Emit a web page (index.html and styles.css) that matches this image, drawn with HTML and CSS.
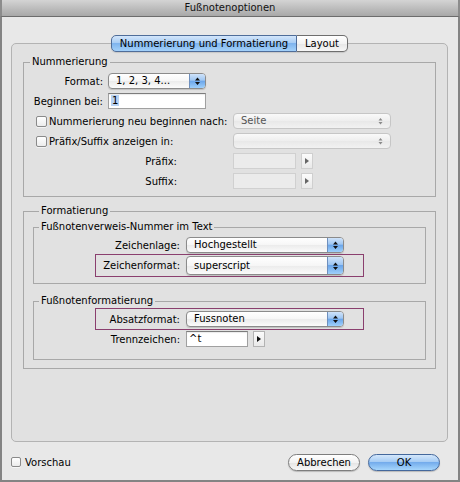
FILE: index.html
```html
<!DOCTYPE html>
<html lang="de">
<head>
<meta charset="utf-8">
<title>Fußnotenoptionen</title>
<link rel="stylesheet" href="styles.css">
</head>
<body>
<div class="window">
  <div class="titlebar">Fußnotenoptionen</div>
  <div class="body">
    <div class="panel">
      <div class="tabs">
        <span class="tab tab-sel">Nummerierung und Formatierung</span><span class="tab tab-layout">Layout</span>
      </div>

      <fieldset class="group group-num">
        <legend>Nummerierung</legend>
        <div class="rows">
          <div class="row">
            <span class="lbl lbl-num">Format:</span>
            <div class="popup popup-format">
              <span class="popup-text">1, 2, 3, 4...</span>
              <span class="popup-arrows"><svg width="7" height="10" viewBox="0 0 7 10"><path d="M3.5 1.5 L6 4.5 L1 4.5 Z M1 6 L6 6 L3.5 9 Z" fill="#111"/></svg></span>
            </div>
          </div>
          <div class="row">
            <span class="lbl lbl-num">Beginnen bei:</span>
            <div class="field field-start"><span class="sel-text">1</span></div>
          </div>
          <div class="row">
            <div class="check-label"><span class="checkbox"></span><span>Nummerierung neu beginnen nach:</span></div>
            <div class="popup popup-wide popup-disabled">
              <span class="popup-text">Seite</span>
              <span class="popup-arrows"><svg width="7" height="10" viewBox="0 0 7 10"><path d="M3.5 2 L5.5 4.5 L1.5 4.5 Z M1.5 6 L5.5 6 L3.5 8.5 Z" fill="#8a8a8a"/></svg></span>
            </div>
          </div>
          <div class="row">
            <div class="check-label"><span class="checkbox"></span><span>Präfix/Suffix anzeigen in:</span></div>
            <div class="popup popup-wide popup-disabled">
              <span class="popup-text"></span>
              <span class="popup-arrows"><svg width="7" height="10" viewBox="0 0 7 10"><path d="M3.5 2 L5.5 4.5 L1.5 4.5 Z M1.5 6 L5.5 6 L3.5 8.5 Z" fill="#8a8a8a"/></svg></span>
            </div>
          </div>
          <div class="row">
            <span class="lbl lbl-affix">Präfix:</span>
            <div class="field field-affix field-disabled"></div>
            <span class="arrow-btn arrow-disabled"><svg width="4" height="6" viewBox="0 0 4 6"><path d="M0 0 L4 3 L0 6 Z" fill="#666"/></svg></span>
          </div>
          <div class="row">
            <span class="lbl lbl-affix">Suffix:</span>
            <div class="field field-affix field-disabled"></div>
            <span class="arrow-btn arrow-disabled"><svg width="4" height="6" viewBox="0 0 4 6"><path d="M0 0 L4 3 L0 6 Z" fill="#666"/></svg></span>
          </div>
        </div>
      </fieldset>

      <fieldset class="group group-fmt">
        <legend>Formatierung</legend>

        <fieldset class="sub sub-ref">
          <legend>Fußnotenverweis-Nummer im Text</legend>
          <div class="frow">
            <span class="lbl lbl-fmt">Zeichenlage:</span>
            <div class="popup popup-fmt">
              <span class="popup-text">Hochgestellt</span>
              <span class="popup-arrows"><svg width="7" height="10" viewBox="0 0 7 10"><path d="M3.5 1.5 L6 4.5 L1 4.5 Z M1 6 L6 6 L3.5 9 Z" fill="#111"/></svg></span>
            </div>
          </div>
          <div class="frow frow-hl frow-tall">
            <span class="lbl lbl-fmt">Zeichenformat:</span>
            <div class="popup popup-fmt popup-tall">
              <span class="popup-text">superscript</span>
              <span class="popup-arrows"><svg width="7" height="10" viewBox="0 0 7 10"><path d="M3.5 1.5 L6 4.5 L1 4.5 Z M1 6 L6 6 L3.5 9 Z" fill="#111"/></svg></span>
            </div>
          </div>
        </fieldset>

        <fieldset class="sub sub-note">
          <legend>Fußnotenformatierung</legend>
          <div class="frow frow-hl">
            <span class="lbl lbl-fmt">Absatzformat:</span>
            <div class="popup popup-fmt">
              <span class="popup-text">Fussnoten</span>
              <span class="popup-arrows"><svg width="7" height="10" viewBox="0 0 7 10"><path d="M3.5 1.5 L6 4.5 L1 4.5 Z M1 6 L6 6 L3.5 9 Z" fill="#111"/></svg></span>
            </div>
          </div>
          <div class="frow frow-sep">
            <span class="lbl lbl-fmt">Trennzeichen:</span>
            <div class="field field-sep"><span>^t</span></div>
            <span class="arrow-btn"><svg width="4" height="6" viewBox="0 0 4 6"><path d="M0 0 L4 3 L0 6 Z" fill="#111"/></svg></span>
          </div>
        </fieldset>
      </fieldset>
    </div>

    <div class="footer">
      <span class="checkbox checkbox-small"></span>
      <span class="preview-label">Vorschau</span>
      <span class="btn btn-cancel">Abbrechen</span>
      <span class="btn btn-ok">OK</span>
    </div>
  </div>
</div>
</body>
</html>
```

FILE: styles.css
```css
* { box-sizing: border-box; }

html, body {
  margin: 0;
  padding: 0;
}

body {
  font-family: "DejaVu Sans", "Liberation Sans", sans-serif;
  font-size: 10px;
  color: #000;
  background: #808080;
}

.window {
  width: 460px;
  height: 482px;
  display: flex;
  flex-direction: column;
}

.titlebar {
  height: 17px;
  line-height: 16px;
  text-align: center;
  color: #111;
  background: linear-gradient(#d4d4d4, #b9b9b9 60%, #a8a8a8);
  border-bottom: 1px solid #6c6c6c;
  border-left: 2px solid #8c8c8c;
  border-right: 2px solid #8c8c8c;
}

.body {
  flex: 1;
  background: #e8e8e8;
  border: 2px solid #848484;
  border-top: 0;
  padding-left: 9px;
  display: flex;
  flex-direction: column;
}

/* tab panel */
.panel {
  width: 437px;
  height: 399px;
  margin-top: 26px;
  border: 1px solid #b3b3b3;
  border-radius: 5px;
  background: #e1e1e1;
  display: flex;
  flex-direction: column;
}

.tabs {
  align-self: center;
  display: flex;
  margin-top: -9px;
  height: 17px;
}

.tab {
  height: 17px;
  line-height: 15px;
  text-align: center;
  border: 1px solid #6e6e6e;
  background: linear-gradient(#ffffff, #f3f3f3 50%, #e6e6e6 51%, #f7f7f7);
  box-shadow: 0 1px 1px rgba(0,0,0,0.12);
}

.tab-sel {
  width: 186px;
  border-radius: 5px 0 0 5px;
  border-color: #4f6d99;
  background: linear-gradient(#d3e6fb, #a9cdf4 45%, #7fb4ee 50%, #a3d1fa 100%);
}

.tab-layout {
  width: 51px;
  border-left: 0;
  border-radius: 0 5px 5px 0;
}

/* group boxes */
fieldset {
  margin: 0;
  min-width: 0;
  border: 1px solid #a8a8a8;
}

legend {
  padding: 0 2px;
  line-height: 12px;
  height: 12px;
}

.group {
  width: 413px;
  margin-left: 11px;
}

.group > legend {
  margin-left: 6px;
}

.group-num {
  margin-top: 4px;
  padding: 5px 0 7px 0;
}

.group-fmt {
  margin-top: 8px;
  padding: 4px 9px 8px 9px;
}

.sub {
  padding: 0;
}

.sub > legend {
  margin-left: 5px;
}

.sub-ref {
  padding-top: 4px;
  padding-bottom: 6px;
}

.sub-note {
  margin-top: 11px;
  padding-top: 0;
  padding-bottom: 12px;
}

/* rows in Nummerierung */
.rows {
  display: flex;
  flex-direction: column;
  gap: 4px;
}

.row {
  height: 16px;
  display: flex;
  align-items: center;
}

.lbl {
  text-align: right;
  white-space: nowrap;
  flex: none;
}

.lbl-num {
  width: 79px;
  margin-right: 5px;
}

.lbl-affix {
  width: 153px;
  margin-right: 56px;
}

.check-label {
  width: 209px;
  padding-left: 12px;
  display: flex;
  align-items: center;
  white-space: nowrap;
  flex: none;
}

.checkbox {
  width: 11px;
  height: 11px;
  flex: none;
  border: 1px solid #8a8a8a;
  border-radius: 2px;
  background: linear-gradient(#ffffff, #ececec);
  box-shadow: 0 1px 0 rgba(255,255,255,0.6);
  margin-right: 2px;
}

/* popup menus */
.popup {
  height: 16px;
  flex: none;
  display: flex;
  border: 1px solid #8b8b8b;
  border-radius: 4px;
  background: linear-gradient(#ffffff, #f6f6f6 50%, #ebebeb 51%, #fbfbfb);
  box-shadow: 0 1px 1px rgba(0,0,0,0.15);
  overflow: hidden;
}

.popup-text {
  flex: 1;
  padding-left: 7px;
  line-height: 14px;
  white-space: nowrap;
}

.popup-arrows {
  width: 16px;
  flex: none;
  display: flex;
  align-items: center;
  justify-content: center;
  border-left: 1px solid #6e8fbd;
  background: linear-gradient(#cfe3fa, #9fc6f2 45%, #6aa5ea 50%, #9fd0fb 100%);
}

.popup-format {
  width: 98px;
}

.popup-wide {
  width: 158px;
}

.popup-disabled {
  border-color: #c6c6c6;
  background: linear-gradient(#f9f9f9, #eeeeee 50%, #e8e8e8 51%, #f2f2f2);
  box-shadow: none;
  color: #555;
}

.popup-disabled .popup-arrows {
  border-left: 0;
  background: transparent;
  width: 20px;
}

.popup-fmt {
  width: 158px;
}

.popup-tall {
  height: 19px;
}

.popup-tall .popup-text {
  line-height: 17px;
}

/* text fields */
.field {
  height: 16px;
  flex: none;
  background: #fff;
  border: 1px solid #a0a0a0;
  border-top-color: #7c7c7c;
  box-shadow: inset 0 1px 1px rgba(0,0,0,0.08);
  line-height: 14px;
  padding-left: 2px;
}

.field-start {
  width: 98px;
}

.sel-text {
  background: #b8d3f4;
  padding: 0 1px;
}

.field-affix {
  width: 63px;
}

.field-disabled {
  background: #ebebeb;
  border-color: #d0d0d0;
  box-shadow: none;
}

.field-sep {
  width: 62px;
}

.arrow-btn {
  width: 12px;
  height: 16px;
  flex: none;
  margin-left: 5px;
  display: flex;
  align-items: center;
  justify-content: center;
  border: 1px solid #b3b3b3;
  background: linear-gradient(#fbfbfb, #e9e9e9);
}

.arrow-disabled {
  border-color: #cfcfcf;
}

/* rows in Formatierung */
.frow {
  width: 269px;
  height: 16px;
  margin-left: 61px;
  display: flex;
  align-items: center;
  border: 1px solid transparent;
  border-width: 0 1px;
}

.frow-hl {
  height: 22px;
  margin-top: 1px;
  border: 1px solid #8a3f6e;
}

.frow-tall {
  height: 23px;
}

.frow-sep {
  margin-top: 1px;
}

.lbl-fmt {
  width: 84px;
  margin-right: 6px;
}

/* footer */
.footer {
  flex: 1;
  display: flex;
  align-items: center;
  padding-top: 2px;
  padding-right: 18px;
}

.checkbox-small {
  width: 10px;
  height: 10px;
  margin-right: 4px;
}

.preview-label {
  white-space: nowrap;
}

.btn {
  width: 72px;
  height: 17px;
  line-height: 15px;
  text-align: center;
  border-radius: 9px;
  border: 1px solid #7d7d7d;
  background: linear-gradient(#ffffff, #f2f2f2 50%, #e4e4e4 51%, #f8f8f8);
  box-shadow: 0 1px 1px rgba(0,0,0,0.2);
}

.btn-cancel {
  margin-left: auto;
  margin-right: 8px;
}

.btn-ok {
  border-color: #44689c;
  background: linear-gradient(#d4e7fb, #a6ccf4 45%, #74acec 50%, #a6d6fc 100%);
}
```
